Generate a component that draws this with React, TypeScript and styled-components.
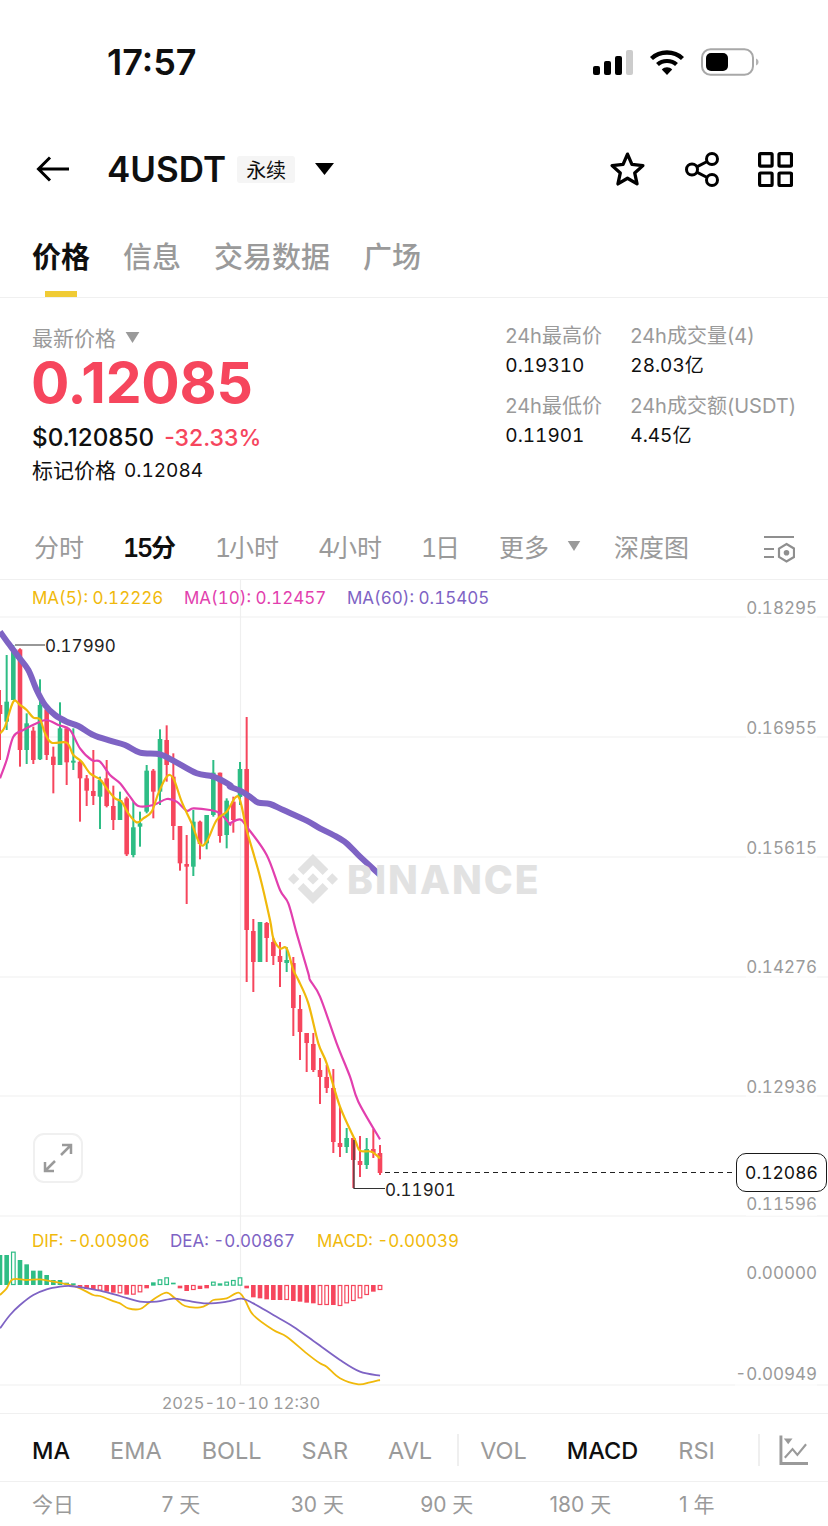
import React from "react";
import styled, { createGlobalStyle } from "styled-components";

const RED = "#F6465D";
const GREEN = "#2EBD85";
const GREY = "#9A9A9A";
const INK = "#0F0F0F";
const LINE = "#F0F0F0";
const YELLOW = "#F0B90B";
const PINK = "#E23FAE";
const PURPLE = "#7E63C4";
const CHART_TOP = 580;

const Global = createGlobalStyle`
  html, body { margin: 0; padding: 0; background: #fff; }
  body { font-family: Inter, "Noto Sans CJK SC", sans-serif; color: ${INK}; }
  * { box-sizing: border-box; }
`;

const Page = styled.div`
  width: 828px;
  height: 1526px;
  overflow: hidden;
  display: flex;
  flex-direction: column;
  background: #fff;
`;

const StatusBar = styled.div`
  height: 124px;
  flex: none;
  display: flex;
  align-items: center;
  justify-content: space-between;
  padding: 0 69px 0 107px;
`;
const Clock = styled.div`
  font-size: 36px;
  font-weight: 600;
`;
const StatusIcons = styled.div`
  display: flex;
  align-items: center;
  gap: 16px;
`;

const Header = styled.div`
  height: 90px;
  flex: none;
  display: flex;
  align-items: center;
  padding: 0 35px 0 36px;
`;
const BackIcon = styled.svg`
  width: 34px;
  height: 26px;
  margin-right: 37px;
`;
const Symbol = styled.div`
  font-size: 35px;
  font-weight: 600;
`;
const Badge = styled.div`
  margin-left: 11px;
  width: 58px;
  height: 27px;
  background: #f5f5f5;
  border-radius: 3px;
  font-size: 20px;
  display: flex;
  align-items: center;
  justify-content: center;
`;
const Caret = styled.svg`
  display: block;
  flex: none;
`;
const HeaderCaret = styled(Caret)`
  margin-left: 20px;
`;
const HeaderActions = styled.div`
  margin-left: auto;
  display: flex;
  align-items: center;
  gap: 38px;
`;

const TabBar = styled.div`
  height: 84px;
  flex: none;
  display: flex;
  gap: 33px;
  padding: 26px 32px 0;
  border-bottom: 1px solid ${LINE};
`;
const Tab = styled.div<{ $active?: boolean }>`
  position: relative;
  height: 36px;
  line-height: 36px;
  font-size: 29px;
  font-weight: ${(p) => (p.$active ? 600 : 500)};
  color: ${(p) => (p.$active ? INK : GREY)};
  ${(p) =>
    p.$active
      ? `&::after { content: ""; position: absolute; left: 13px; width: 32px; top: 51px; height: 6px; background: #F0CB35; }`
      : ""}
`;

const PriceSection = styled.div`
  height: 219px;
  flex: none;
  display: flex;
  justify-content: space-between;
  padding: 0 32px;
`;
const PriceLeft = styled.div`
  padding-top: 24px;
  display: flex;
  flex-direction: column;
`;
const LabelRow = styled.div`
  display: flex;
  align-items: center;
  gap: 9px;
  height: 30px;
  font-size: 21px;
  color: ${GREY};
`;
const BigPrice = styled.div`
  margin-top: 1px;
  margin-left: -1px;
  height: 60px;
  line-height: 60px;
  font-size: 57px;
  font-weight: 700;
  color: ${RED};
  letter-spacing: -0.2px;
`;
const UsdRow = styled.div`
  margin-top: 10px;
  height: 30px;
  line-height: 30px;
  display: flex;
  gap: 10px;
  font-size: 24.200px;
  font-weight: 500;
`;
const Change = styled.span`
  color: ${RED};
  font-size: 23px;
`;
const MarkRow = styled.div`
  margin-top: 3px;
  height: 30px;
  line-height: 30px;
  font-size: 21px;
  display: flex;
  gap: 8px;
`;
const MarkValue = styled.span`
  font-size: 19px;
  font-variant-numeric: tabular-nums;
`;
const Stats = styled.div`
  padding-top: 23px;
  display: grid;
  grid-template-columns: 125px auto;
  grid-auto-rows: 60px;
  row-gap: 10px;
  align-self: flex-start;
`;
const Stat = styled.div`
  display: flex;
  flex-direction: column;
`;
const StatLabel = styled.div`
  height: 30px;
  line-height: 30px;
  font-size: 20px;
  color: ${GREY};
  white-space: nowrap;
`;
const StatValue = styled.div`
  height: 30px;
  line-height: 30px;
  font-size: 19px;
  white-space: nowrap;
  font-variant-numeric: tabular-nums;
`;

const TimeBar = styled.div`
  height: 63px;
  flex: none;
  display: flex;
  align-items: center;
  padding: 0 33px 5px 34px;
  gap: 39px;
  border-bottom: 1px solid ${LINE};
`;
const TimeItem = styled.div<{ $active?: boolean }>`
  font-size: 25px;
  white-space: nowrap;
  color: ${(p) => (p.$active ? INK : GREY)};
  font-weight: ${(p) => (p.$active ? 600 : 400)};
`;
const TimeDigits = styled.span`
  font-variant-numeric: tabular-nums;
  letter-spacing: -2.200px;
`;
const MoreGroup = styled.div`
  display: flex;
  align-items: center;
  gap: 18px;
  margin-right: -6px;
`;
const DepthIcon = styled.svg`
  margin-left: auto;
  margin-top: 6px;
`;

const Chart = styled.div`
  position: relative;
  height: 834px;
  flex: none;
  border-bottom: 1px solid ${LINE};
  font-variant-numeric: tabular-nums;
`;
const ChartDrawing = styled.svg`
  display: block;
  width: 828px;
  height: 833px;
`;
const Legend = styled.div<{ $y: number }>`
  position: absolute;
  left: 32px;
  top: ${(p) => p.$y - CHART_TOP - 11}px;
  height: 24px;
  line-height: 24px;
  font-size: 17px;
`;
const LegendItem = styled.span<{ $color: string; $x: number }>`
  position: absolute;
  left: ${(p) => p.$x - 32}px;
  color: ${(p) => p.$color};
  white-space: nowrap;
`;
const AxisLabel = styled.div<{ $y: number }>`
  position: absolute;
  right: 11px;
  top: ${(p) => p.$y - CHART_TOP - 11}px;
  height: 24px;
  line-height: 24px;
  font-size: 17px;
  color: ${GREY};
  background: rgba(255, 255, 255, 0.6);
`;
const PriceNote = styled.div<{ $x: number; $y: number }>`
  position: absolute;
  left: ${(p) => p.$x}px;
  top: ${(p) => p.$y - CHART_TOP - 11}px;
  height: 24px;
  line-height: 24px;
  font-size: 17px;
  color: #222;
`;
const PriceTag = styled.div`
  position: absolute;
  left: 736px;
  top: ${1153 - CHART_TOP}px;
  width: 91px;
  height: 39px;
  border: 1px solid #1a1a1a;
  border-radius: 10px;
  background: #fff;
  display: flex;
  align-items: center;
  justify-content: center;
  font-size: 17.500px;
  color: #111;
`;
const ExpandButton = styled.div`
  position: absolute;
  left: 33px;
  top: ${1133 - CHART_TOP}px;
  width: 50px;
  height: 50px;
  border: 2px solid #f0f0f0;
  border-radius: 11px;
  background: #fff;
  display: flex;
  align-items: center;
  justify-content: center;
`;
const DateLabel = styled.div`
  position: absolute;
  left: 241px;
  transform: translateX(-50%);
  top: ${1402 - CHART_TOP - 11}px;
  height: 24px;
  line-height: 24px;
  font-size: 16.500px;
  color: ${GREY};
  white-space: nowrap;
`;
const Watermark = styled.div`
  position: absolute;
  left: 288px;
  top: ${854 - CHART_TOP}px;
  height: 50px;
  display: flex;
  align-items: center;
  gap: 9px;
  color: #e2e2e2;
  font-size: 39px;
  font-weight: 800;
  letter-spacing: 2px;
`;

const IndicatorBar = styled.div`
  height: 68px;
  flex: none;
  display: flex;
  align-items: center;
  gap: 40px;
  padding: 5px 0 0 32px;
  border-bottom: 1px solid ${LINE};
`;
const Indicator = styled.div<{ $active?: boolean }>`
  font-size: 23.500px;
  color: ${(p) => (p.$active ? INK : GREY)};
  font-weight: ${(p) => (p.$active ? 550 : 400)};
`;
const Divider = styled.div<{ $before: number; $after: number }>`
  width: 2px;
  height: 32px;
  background: #efefef;
  margin: 0 ${(p) => p.$after - 40}px 0 ${(p) => p.$before - 40}px;
`;
const RangeBar = styled.div`
  flex: 1;
  display: grid;
  grid-template-columns: repeat(6, 129.400px);
  padding-left: 32px;
  padding-top: 6px;
`;
const RangeItem = styled.div`
  font-size: 21px;
  color: ${GREY};
`;

type C = [0 | 1, number, number, number, number];

const topCandles: C[] = [
  [0, 210, 420, 255, 282],
  [1, 105, 330, 245, 305],
  [1, 75, 240, 90, 240],
  [0, 85, 440, 88, 390],
  [1, 280, 432, 310, 390],
  [0, 320, 432, 332, 420],
  [1, 178, 420, 255, 418],
  [0, 265, 420, 268, 405],
  [0, 380, 520, 410, 435],
  [1, 247, 435, 325, 435],
  [0, 320, 495, 325, 427],
  [1, 325, 450, 422, 428],
  [0, 420, 605, 425, 475],
  [0, 465, 558, 475, 512],
  [0, 390, 555, 513, 528],
  [1, 470, 627, 480, 530],
  [0, 420, 562, 475, 558],
  [0, 497, 630, 558, 600],
  [1, 515, 600, 540, 600],
  [0, 530, 708, 535, 703],
  [1, 545, 712, 622, 705],
  [1, 575, 680, 610, 620],
  [1, 435, 580, 452, 575],
  [0, 447, 595, 452, 515],
  [1, 328, 555, 357, 515],
  [0, 316, 485, 360, 435],
  [0, 400, 660, 470, 618],
  [0, 618, 752, 618, 730],
  [0, 645, 852, 732, 740],
  [1, 570, 768, 605, 740],
  [0, 602, 718, 605, 672],
  [1, 585, 688, 585, 670],
  [1, 420, 590, 458, 585],
  [0, 458, 668, 458, 648],
  [1, 535, 685, 542, 645],
  [0, 530, 638, 545, 600],
].map((c) => [c[0], 620 + c[1] / 3, 620 + c[2] / 3, 620 + c[3] / 3, 620 + c[4] / 3] as C);

const restCandles: C[] = [
  [1, 762, 805, 769, 797],
  [0, 717, 982, 769, 930],
  [0, 919, 992, 931, 962],
  [1, 922, 962, 922, 962],
  [0, 922, 962, 923, 938],
  [0, 938, 965, 942, 956],
  [0, 942, 987, 956, 962],
  [1, 947, 972, 960, 963],
  [0, 957, 1036, 963, 1008],
  [0, 995, 1060, 1009, 1032],
  [0, 1033, 1072, 1033, 1043],
  [0, 1033, 1072, 1044, 1070],
  [0, 1058, 1104, 1070, 1077],
  [0, 1065, 1093, 1077, 1088],
  [0, 1069, 1153, 1088, 1142],
  [0, 1107, 1157, 1143, 1147],
  [1, 1128, 1153, 1138, 1147],
  [0, 1138, 1188, 1138, 1160],
  [0, 1136, 1177, 1161, 1165],
  [1, 1138, 1169, 1149, 1165],
  [0, 1129, 1158, 1149, 1153],
  [0, 1145, 1175, 1153, 1173],
];

const candles = [...topCandles, ...restCandles];
const STEP = 20 / 3;

const fromTop = (p: number[][]) => p.map(([x, y]) => [x / 3, 620 + y / 3]);
const fromMid = (p: number[][]) => p.map(([x, y]) => [230 + x / 3, 700 + y / 3]);
const fromLow = (p: number[][]) => p.map(([x, y]) => [280 + x / 3, 980 + y / 3]);
const fromMacd = (p: number[][]) => p.map(([x, y]) => [x / 3, 1220 + y / 3]);

const smooth = (pts: number[][]) => {
  let d = `M${pts[0][0]} ${pts[0][1]}`;
  for (let i = 0; i < pts.length - 1; i++) {
    const a = pts[Math.max(0, i - 1)];
    const b = pts[i];
    const c = pts[i + 1];
    const e = pts[Math.min(pts.length - 1, i + 2)];
    d += ` C${b[0] + (c[0] - a[0]) / 6} ${b[1] + (c[1] - a[1]) / 6} ${c[0] - (e[0] - b[0]) / 6} ${c[1] - (e[1] - b[1]) / 6} ${c[0]} ${c[1]}`;
  }
  return d;
};

const ma60 = [
  ...fromTop([[0,35],[25,70],[55,110],[85,150],[110,210],[135,255],[165,285],[200,305],[235,318],[280,345],[330,362],[375,375],[420,398],[480,403],[520,422],[590,460],[640,470],[690,495]]),
  ...fromMid([[0,260],[30,272],[60,290],[85,308],[120,312],[160,330],[230,362],[270,385],[310,405],[350,430],[390,470],[450,525]]),
];
const ma5 = [
  ...fromTop([[0,340],[15,320],[40,245],[60,255],[80,270],[100,293],[120,298],[135,340],[155,368],[200,368],[220,405],[245,425],[270,460],[300,478],[320,505],[345,535],[365,545],[385,580],[410,607],[430,595],[455,575],[475,520],[500,470],[520,475],[545,545],[575,610],[600,672],[620,665],[650,600],[680,575],[715,530]]),
  ...fromMid([[50,390],[90,530],[120,660],[130,715],[150,745],[170,745],[190,810]]),
  ...fromLow([[55,0],[85,70],[115,190],[140,250],[180,380],[225,480],[240,512],[275,515],[300,535]]),
];
const ma10 = [
  ...fromTop([[0,475],[20,420],[40,350],[70,330],[110,310],[140,300],[175,315],[210,330],[240,385],[275,420],[300,425],[330,465],[360,490],[390,530],[415,558],[460,555],[500,537],[530,545],[560,572],[580,565],[630,570],[660,580],[690,612]]),
  ...fromMid([[0,370],[30,358],[50,380],[110,465],[150,570],[175,610],[200,700],[235,820]]),
  ...fromLow([[90,0],[120,50],[170,190],[210,290],[235,365],[300,478]]),
];
const dif = fromMacd([[0,225],[20,205],[38,178],[80,180],[120,178],[160,185],[210,195],[240,205],[280,225],[300,228],[345,245],[360,250],[385,265],[420,267],[445,250],[470,232],[500,218],[525,235],[555,258],[600,262],[625,252],[640,240],[680,235],[715,218],[735,240],[760,285],[820,330],[860,350],[920,400],[960,430],[980,440],[1020,475],[1075,493],[1110,487],[1140,480]]);
const dea = fromMacd([[0,325],[30,285],[60,255],[100,225],[140,208],[180,200],[210,198],[250,203],[300,212],[360,228],[420,245],[470,245],[520,236],[560,242],[620,250],[680,245],[725,236],[760,250],[820,285],[880,320],[950,370],[1020,420],[1080,455],[1140,467]]);

// [colour, top and bottom in zoomed px, hollow]; bars sit on the zero line
type H = [0 | 1, number, number, number?];
const bars: H[] = [
  [1,105,195],[1,105,195],[1,95,195,1],[1,120,195],[1,133,195],[1,152,195],[1,152,195],[1,165,195],[1,180,195],[1,180,195],[1,188,195],[1,190,195],
  [0,195,203],[0,195,207],[0,195,210],[0,195,212,1],[0,195,215],[0,195,218],[0,195,220,1],[0,195,224],[0,195,224,1],[0,195,217,1],[0,195,205],
  [1,187,197],[1,178,195,1],[1,172,195,1],[1,188,193],
  [0,197,205],[0,195,213],[0,195,210,1],[0,197,207],[0,195,205],
  [1,185,197,1],[1,190,197],[1,185,197,1],[1,180,197,1],[1,172,197,1],
  [0,197,205],[0,195,232],[0,195,235],[0,195,238],[0,195,240],[0,195,240],[0,195,240,1],[0,195,243],[0,195,245],[0,195,248],[0,195,250],[0,195,255,1],[0,195,255,1],[0,195,255],[0,195,258,1],[0,195,250,1],[0,195,243,1],[0,195,235,1],[0,195,225,1],[0,195,215],[0,195,210,1],
];

const grids = [617, 737, 857, 977, 1096, 1216, 1385];
const axis: [number, string][] = [
  [607, "0.18295"],
  [727, "0.16955"],
  [847, "0.15615"],
  [966, "0.14276"],
  [1086, "0.12936"],
  [1203, "0.11596"],
  [1272, "0.00000"],
  [1373, "-0.00949"],
];

const stats = [
  ["24h最高价", "0.19310"],
  ["24h成交量(4)", "28.03亿"],
  ["24h最低价", "0.11901"],
  ["24h成交额(USDT)", "4.45亿"],
];

const BINANCE_MARK =
  "M16.624 13.9202l2.7175 2.7154-7.353 7.353-7.353-7.352 2.7175-2.7164 4.6355 4.6595 4.6356-4.6595zm4.6366-4.6366L24 12l-2.7154 2.7164L18.5682 12l2.6924-2.7164zm-9.272.001l2.7163 2.6914-2.7164 2.7174v-.001L9.2721 12l2.7164-2.7154zm-9.2722-.001L5.4088 12l-2.6914 2.6924L0 12l2.7164-2.7164zM11.9885.0115l7.353 7.329-2.7174 2.7154-4.6356-4.6356-4.6355 4.6595-2.7174-2.7154 7.353-7.353z";

const Down = ({ w, h, color }: { w: number; h: number; color: string }) => (
  <svg width={w} height={h} viewBox="0 0 10 8" style={{ display: "block", flex: "none" }}>
    <path d="M0 0H10L5 8Z" fill={color} />
  </svg>
);

export default function App() {
  return (
    <Page>
      <Global />
      <StatusBar>
        <Clock>17:57</Clock>
        <StatusIcons>
          <svg width="40" height="27" viewBox="0 0 40 27">
            <rect x="0" y="17" width="7" height="9" rx="2" fill="#000" />
            <rect x="11" y="12" width="7" height="14" rx="2" fill="#000" />
            <rect x="22" y="7" width="7" height="19" rx="2" fill="#000" />
            <rect x="33" y="1" width="7" height="25" rx="2" fill="#ccc" />
          </svg>
          <svg width="36" height="27" viewBox="0 0 36 27">
            <path d="M2.500 9.500C11 1.500 25 1.500 33.500 9.500" fill="none" stroke="#000" strokeWidth="4.400" />
            <path d="M8.500 15.500C13.500 10.800 22.500 10.800 27.500 15.500" fill="none" stroke="#000" strokeWidth="4.200" />
            <path d="M12.800 20.500C15.600 17.400 20.400 17.400 23.200 20.500L18 26Z" fill="#000" />
          </svg>
          <svg width="58" height="28" viewBox="0 0 58 28">
            <rect x="1" y="1.200" width="51" height="25.600" rx="8.500" fill="none" stroke="#a8a8a8" strokeWidth="2" />
            <rect x="5" y="5" width="22" height="18" rx="5" fill="#000" />
            <path d="M55 10.500C57 11.500 57.500 12.500 57.500 14S57 16.500 55 17.500Z" fill="#b5b5b5" />
          </svg>
        </StatusIcons>
      </StatusBar>

      <Header>
        <BackIcon viewBox="0 0 34 26">
          <path d="M33 13H3M14 1.500L2.500 13L14 24.500" fill="none" stroke="#000" strokeWidth="3" />
        </BackIcon>
        <Symbol>4USDT</Symbol>
        <Badge>永续</Badge>
        <HeaderCaret width="19" height="12" viewBox="0 0 19 12">
          <path d="M0 0H19L9.500 12Z" fill="#000" />
        </HeaderCaret>
        <HeaderActions>
          <svg width="37" height="36" viewBox="0 0 36 35">
            <path d="M18 3L22.300 13L33 14.200L25 21.300L27.300 32L18 26.500L8.700 32L11 21.300L3 14.200L13.700 13Z" fill="none" stroke="#000" strokeWidth="3.200" strokeLinejoin="round" />
          </svg>
          <svg width="36" height="35" viewBox="0 0 36 35">
            <g fill="none" stroke="#000" strokeWidth="3">
              <circle cx="8" cy="17.500" r="5.500" />
              <circle cx="28" cy="7" r="5.500" />
              <circle cx="28" cy="28" r="5.500" />
              <path d="M12.800 14.800L23.200 9.500M12.800 20.200L23.200 25.500" />
            </g>
          </svg>
          <svg width="35" height="35" viewBox="0 0 35 35">
            <g fill="none" stroke="#000" strokeWidth="3.200">
              <rect x="1.600" y="1.600" width="12.500" height="12.500" rx="1" />
              <rect x="21" y="1.600" width="12.500" height="12.500" rx="1" />
              <rect x="1.600" y="21" width="12.500" height="12.500" rx="1" />
              <rect x="21" y="21" width="12.500" height="12.500" rx="1" />
            </g>
          </svg>
        </HeaderActions>
      </Header>

      <TabBar>
        <Tab $active>价格</Tab>
        <Tab>信息</Tab>
        <Tab>交易数据</Tab>
        <Tab>广场</Tab>
      </TabBar>

      <PriceSection>
        <PriceLeft>
          <LabelRow>
            最新价格
            <Down w={15} h={11} color={GREY} />
          </LabelRow>
          <BigPrice>0.12085</BigPrice>
          <UsdRow>
            $0.120850 <Change>-32.33%</Change>
          </UsdRow>
          <MarkRow>
            <span>标记价格</span>
            <MarkValue>0.12084</MarkValue>
          </MarkRow>
        </PriceLeft>
        <Stats>
          {stats.map(([label, value]) => (
            <Stat key={label}>
              <StatLabel>{label}</StatLabel>
              <StatValue>{value}</StatValue>
            </Stat>
          ))}
        </Stats>
      </PriceSection>

      <TimeBar>
        <TimeItem>分时</TimeItem>
        <TimeItem $active><TimeDigits>15</TimeDigits>分</TimeItem>
        <TimeItem><TimeDigits>1</TimeDigits>小时</TimeItem>
        <TimeItem><TimeDigits>4</TimeDigits>小时</TimeItem>
        <TimeItem><TimeDigits>1</TimeDigits>日</TimeItem>
        <MoreGroup>
          <TimeItem>更多</TimeItem>
          <Down w={14} h={10} color={GREY} />
        </MoreGroup>
        <TimeItem>深度图</TimeItem>
        <DepthIcon width="31" height="28" viewBox="0 0 31 28">
          <g fill="none" stroke="#8f8f8f" strokeWidth="2.200">
            <path d="M0 2H30M0 14H10M0 22H10" />
            <path d="M22.500 9L30 13.500V22L22.500 26.500L15 22V13.500Z" />
          </g>
          <circle cx="22.500" cy="17.800" r="2.800" fill="#8f8f8f" />
        </DepthIcon>
      </TimeBar>

      <Chart>
        <ChartDrawing viewBox={`0 ${CHART_TOP} 828 833`}>
          <g stroke="#EFEFEF" strokeWidth="1.200">
            {grids.map((y) => (
              <line key={y} x1="0" x2="828" y1={y} y2={y} />
            ))}
            <line x1="240.500" x2="240.500" y1={CHART_TOP} y2="1385" />
          </g>
          {candles.map((c, i) => {
            const x = i * STEP;
            const col = c[0] ? GREEN : RED;
            return (
              <g key={i} fill={col}>
                <rect x={x - 1} y={c[1]} width="2" height={c[2] - c[1]} />
                <rect x={x - 2.300} y={c[3]} width="4.600" height={Math.max(1.500, c[4] - c[3])} />
              </g>
            );
          })}
          <g fill="none" strokeLinejoin="round" strokeLinecap="butt">
            <path d={smooth(ma10)} stroke={PINK} strokeWidth="2.200" />
            <path d={smooth(ma5)} stroke={YELLOW} strokeWidth="2.200" />
            <path d={smooth(ma60)} stroke={PURPLE} strokeWidth="6" />
          </g>
          <path d="M15 645H45M354 1140V1188.500H385" fill="none" stroke="#333" strokeWidth="1.200" />
          <line x1="385" x2="735" y1="1172.500" y2="1172.500" stroke="#222" strokeWidth="1.200" strokeDasharray="5 4" />
          {bars.map((b, i) => {
            const x = i * STEP;
            const top = 1220 + b[1] / 3;
            const h = (b[2] - b[1]) / 3;
            const col = b[0] ? GREEN : RED;
            return b[3] ? (
              <rect key={i} x={x - 1.800} y={top + 0.500} width="3.600" height={Math.max(1, h - 1)} fill="#fff" stroke={col} strokeWidth="1.200" />
            ) : (
              <rect key={i} x={x - 2.300} y={top} width="4.600" height={h} fill={col} />
            );
          })}
          <g fill="none" strokeWidth="1.800">
            <path d={smooth(dif)} stroke={YELLOW} />
            <path d={smooth(dea)} stroke={PURPLE} />
          </g>
        </ChartDrawing>

        <Legend $y={597}>
          <LegendItem $color={YELLOW} $x={32}>MA(5): 0.12226</LegendItem>
          <LegendItem $color={PINK} $x={184}>MA(10): 0.12457</LegendItem>
          <LegendItem $color={PURPLE} $x={347}>MA(60): 0.15405</LegendItem>
        </Legend>
        <Legend $y={1240}>
          <LegendItem $color={YELLOW} $x={32}>DIF: -0.00906</LegendItem>
          <LegendItem $color={PURPLE} $x={170}>DEA: -0.00867</LegendItem>
          <LegendItem $color={YELLOW} $x={317}>MACD: -0.00039</LegendItem>
        </Legend>

        {axis.map(([y, v]) => (
          <AxisLabel key={v} $y={y}>{v}</AxisLabel>
        ))}
        <PriceNote $x={45} $y={645}>0.17990</PriceNote>
        <PriceNote $x={385} $y={1189}>0.11901</PriceNote>
        <PriceTag>0.12086</PriceTag>
        <ExpandButton>
          <svg width="30" height="30" viewBox="0 0 30 30">
            <path d="M18 12L28 2M19 2H28V11M12 18L2 28M2 19V28H11" fill="none" stroke="#9a9a9a" strokeWidth="2.500" />
          </svg>
        </ExpandButton>
        <DateLabel>2025-10-10 12:30</DateLabel>
        <Watermark>
          <svg width="50" height="50" viewBox="0 0 24 24">
            <path d={BINANCE_MARK} fill="#e2e2e2" />
          </svg>
          BINANCE
        </Watermark>
      </Chart>

      <IndicatorBar>
        <Indicator $active>MA</Indicator>
        <Indicator>EMA</Indicator>
        <Indicator>BOLL</Indicator>
        <Indicator>SAR</Indicator>
        <Indicator>AVL</Indicator>
        <Divider $before={25} $after={21} />
        <Indicator>VOL</Indicator>
        <Indicator $active>MACD</Indicator>
        <Indicator>RSI</Indicator>
        <Divider $before={43} $after={19} />
        <svg width="29" height="31" viewBox="0 0 30 31">
          <path d="M2 0V29H30" fill="none" stroke="#9a9a9a" strokeWidth="3" />
          <path d="M5 3H14L9.500 9Z" fill="#9a9a9a" />
          <path d="M6 23L14 14L19 20L28 9" fill="none" stroke="#9a9a9a" strokeWidth="2.200" />
        </svg>
      </IndicatorBar>

      <RangeBar>
        <RangeItem>今日</RangeItem>
        <RangeItem>7 天</RangeItem>
        <RangeItem>30 天</RangeItem>
        <RangeItem>90 天</RangeItem>
        <RangeItem>180 天</RangeItem>
        <RangeItem>1 年</RangeItem>
      </RangeBar>
    </Page>
  );
}
